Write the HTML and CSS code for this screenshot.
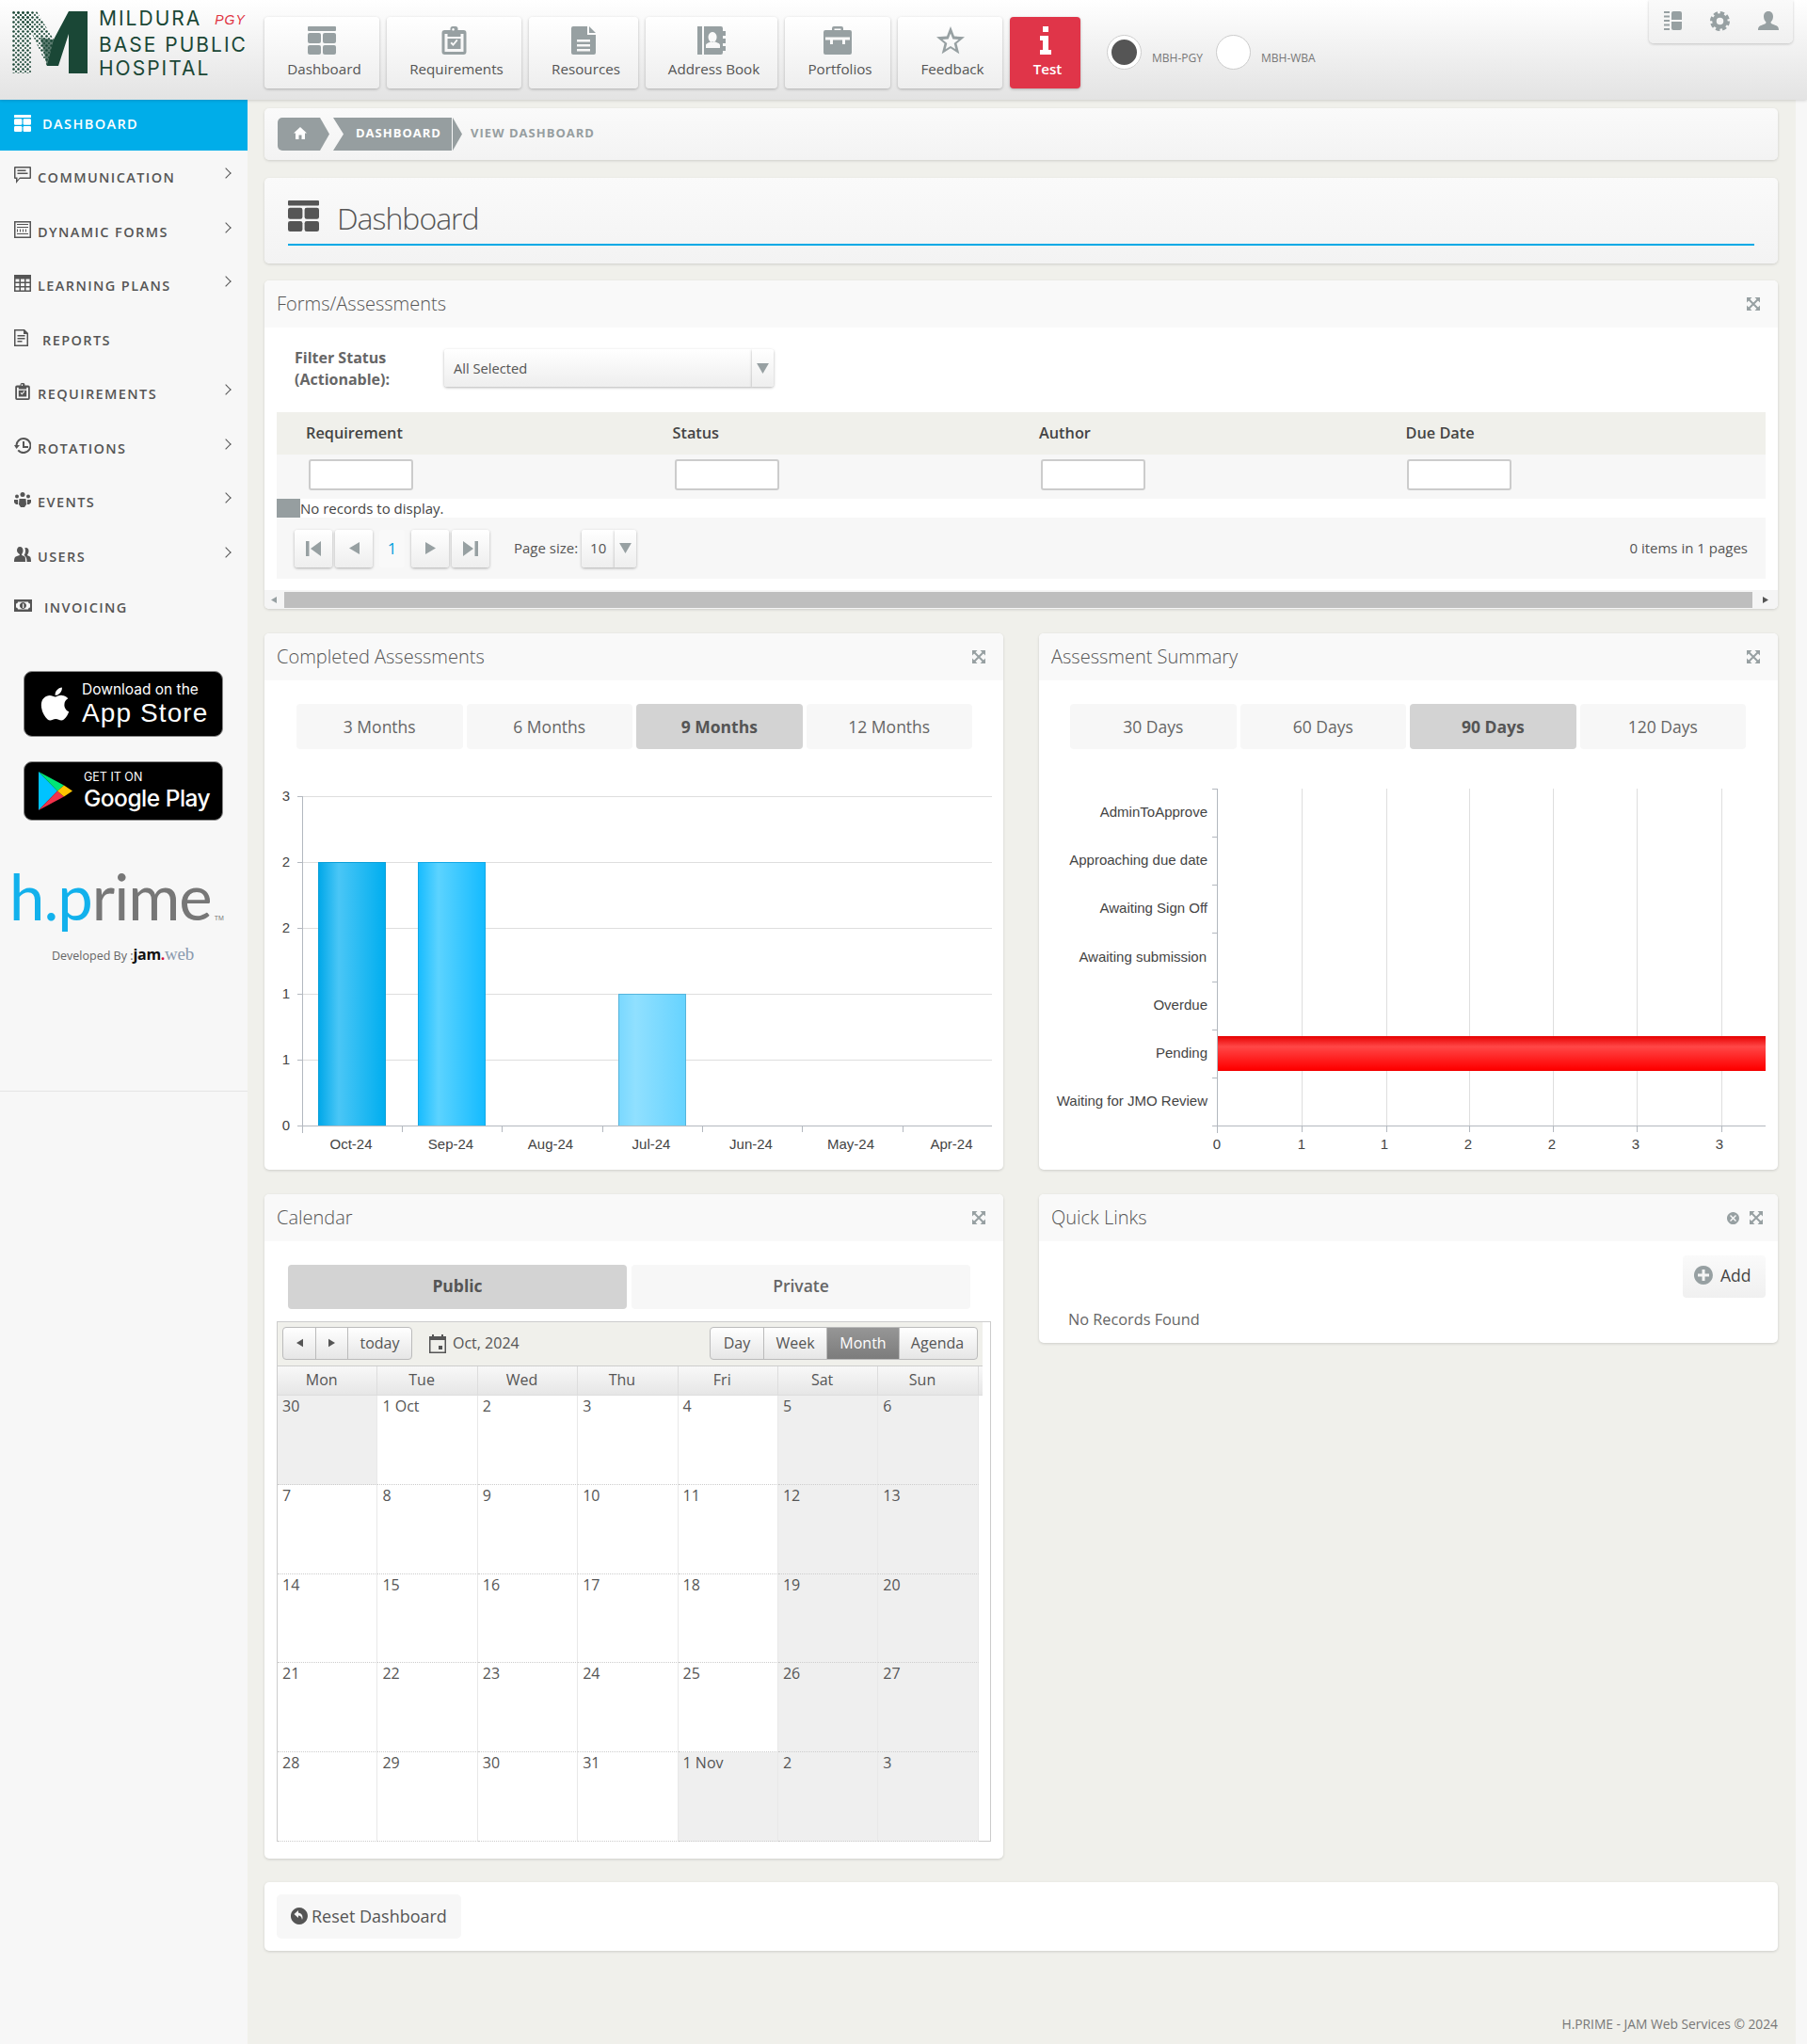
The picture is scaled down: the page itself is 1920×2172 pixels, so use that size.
FILE: index.html
```html
<!DOCTYPE html>
<html lang="en">
<head>
    <meta charset="UTF-8">
    <meta name="viewport" content="width=device-width, initial-scale=1.0">
    <title>Dashboard</title>
    <link rel="stylesheet" href="styles.css">
</head>
<body>
    <svg class="sprite" width="0" height="0">
        <defs>
            <symbol id="i-dash" viewBox="0 0 30 30"><rect width="30" height="5" rx="1"/><rect y="7" width="14" height="11" rx="2"/><rect x="16" y="7" width="14" height="11" rx="2"/><rect y="20" width="14" height="10" rx="2"/><rect x="16" y="20" width="14" height="10" rx="2"/></symbol>
            <symbol id="i-expand" viewBox="0 0 14 14"><path d="M0 0h5.500L0 5.500zM14 0v5.500L8.500 0zM0 14V8.500L5.500 14zM14 14H8.500L14 8.500z"/><path d="M2 2l10 10M12 2L2 12" stroke="currentColor" stroke-width="2" fill="none"/></symbol>
            <symbol id="i-clip" viewBox="0 0 26 30"><path fill-rule="evenodd" d="M3 4h6V2.500A2.500 2.500 0 0 1 11.500 0h3A2.500 2.500 0 0 1 17 2.500V4h6a3 3 0 0 1 3 3v20a3 3 0 0 1-3 3H3a3 3 0 0 1-3-3V7a3 3 0 0 1 3-3zm0 4v19h20V8h-3v3H6V8zm9-6a1.300 1.300 0 1 0 .1 0zM6 13h14v11H6zm3 5l3 3 5-6-1.400-1.200L12 18.200l-1.600-1.600z"/></symbol>
            <symbol id="i-arrow" viewBox="0 0 10 12"><path d="M10 0v12L0 6z"/></symbol>
            <symbol id="i-down" viewBox="0 0 14 12"><path d="M0 0h14L7 12z"/></symbol>
        </defs>
    </svg>

    <header class="topbar">
        <div class="brand">
            <svg class="brand-mark" viewBox="0 0 80 66">
                <defs>
                    <pattern id="dots" width="5" height="5" patternUnits="userSpaceOnUse"><circle cx="1.500" cy="1.500" r="1.300" fill="#1a4736"/><circle cx="4" cy="4" r="1" fill="#1a4736"/></pattern>
                </defs>
                <rect width="20" height="66" fill="url(#dots)"/>
                <polygon points="0,0 26,0 44,30 49,58 37,58 20,22" fill="url(#dots)"/>
                <polygon points="30,28 44,30 49,58 37,58" fill="#1a4736" opacity=".7"/>
                <polygon points="60,0 80,0 80,66 60,66 60,24 49,58 37,58 44,30" fill="#1a4736"/>
            </svg>
            <div class="brand-name">
                <div>MILDURA <em>PGY</em></div>
                <div>BASE PUBLIC</div>
                <div>HOSPITAL</div>
            </div>
        </div>
        <nav class="topnav">
            <a class="topnav-item w-dash"><svg width="30" height="30"><use href="#i-dash"/></svg><span>Dashboard</span></a>
            <a class="topnav-item w-req"><svg width="27" height="30"><use href="#i-clip"/></svg><span>Requirements</span></a>
            <a class="topnav-item w-res"><svg width="26" height="30" viewBox="0 0 26 30"><path fill-rule="evenodd" d="M2 0h15v9h9v19a2 2 0 0 1-2 2H2a2 2 0 0 1-2-2V2a2 2 0 0 1 2-2zm17 0l7 7h-7zM6 14v2.500h14V14zm0 5v2.500h14V19zm0 5v2.500h14V24z"/></svg><span>Resources</span></a>
            <a class="topnav-item w-addr"><svg width="30" height="30" viewBox="0 0 30 30"><path fill-rule="evenodd" d="M0 0h5v30H0zM7 0h18a2 2 0 0 1 2 2v3h3v5h-3v3h3v5h-3v3h3v5h-3v2a2 2 0 0 1-2 2H7zm9 6a4.500 5.500 0 1 0 .1 0zm-7 17h15v-3c0-2-4-3-5-3.500h-5C13 17 9 18 9 20z"/></svg><span>Address Book</span></a>
            <a class="topnav-item w-port"><svg width="30" height="30" viewBox="0 0 30 30"><path fill-rule="evenodd" d="M9 4V2a2 2 0 0 1 2-2h8a2 2 0 0 1 2 2v2h7a2 2 0 0 1 2 2v22a2 2 0 0 1-2 2H2a2 2 0 0 1-2-2V6a2 2 0 0 1 2-2zm2.500 0h7V2.500h-7zM2 11.500v3h5V19h3v-4.500h10V19h3v-4.500h5v-3z"/></svg><span>Portfolios</span></a>
            <a class="topnav-item w-feed"><svg width="30" height="30" viewBox="0 0 30 30"><path fill-rule="evenodd" d="M15 0l4 10.500 11 .8-8.500 7 2.800 11L15 23.300 5.700 29.300l2.800-11-8.500-7 11-.8zm0 7.500l-2.300 6-6.300.5 4.900 4-1.600 6.300 5.300-3.400 5.300 3.400-1.600-6.300 4.900-4-6.300-.5z"/></svg><span>Feedback</span></a>
            <a class="topnav-item w-test is-alert"><svg width="12" height="30" viewBox="0 0 12 30"><path d="M3 0h6v6H3zM0 10h9v15h3v5H0v-5h3V15H0z"/></svg><span>Test</span></a>
        </nav>
        <div class="site-switch">
            <span class="radio is-on"></span><label>MBH-PGY</label>
            <span class="radio"></span><label>MBH-WBA</label>
        </div>
        <div class="toolbox">
            <svg width="19" height="20" viewBox="0 0 19 20"><path d="M0 0h6v2H0zM0 4.500h6v2H0zM0 9h6v2H0zM0 13.500h6v2H0zM0 18h6v2H0zM8 2a2 2 0 0 1 2-2h7a2 2 0 0 1 2 2v7H8zM8 11h11v7a2 2 0 0 1-2 2h-7a2 2 0 0 1-2-2z"/></svg>
            <svg width="21" height="21" viewBox="0 0 21 21"><circle cx="10.500" cy="10.500" r="6" fill="none" stroke="#97a0a2" stroke-width="4.500"/><circle cx="10.500" cy="10.500" r="9" fill="none" stroke="#97a0a2" stroke-width="3" stroke-dasharray="4.400 2.670"/></svg>
            <svg width="22" height="20" viewBox="0 0 22 20"><path d="M11 0c3.500 0 5 2.500 5 5.500 0 2.500-1 4.500-2.500 6 0 1.500 1 2 4 3 3 1 4.500 2 4.500 5.500H0c0-3.500 1.500-4.500 4.500-5.500s4-1.500 4-3C7 10 6 8 6 5.500 6 2.500 7.500 0 11 0z"/></svg>
        </div>
    </header>

    <div class="layout">
        <aside class="sidebar">
            <div class="sidebar-inner">
                <ul class="sidemenu">
                    <li class="is-active"><svg width="18" height="18"><use href="#i-dash"/></svg><span class="gap-l">DASHBOARD</span></li>
                    <li><svg width="18" height="18" viewBox="0 0 18 18"><path fill-rule="evenodd" d="M1 0h16a1 1 0 0 1 1 1v11a1 1 0 0 1-1 1H6l-4 5v-5H1a1 1 0 0 1-1-1V1a1 1 0 0 1 1-1zm.5 1.500v10h2v3l2.500-3h10.500v-10zM3.500 3.500h9V5h-9zm0 3h11V8h-11z"/></svg><span>COMMUNICATION</span><i class="chev"></i></li>
                    <li><svg width="18" height="18" viewBox="0 0 18 18"><path fill-rule="evenodd" d="M0 0h18v18H0zm1.500 1.500v15h15v-15zM3 3h12v1H3zm0 3h12v1H3zm0 2.500h1v3H3zm3 0h1v3H6zm3 0h1v3H9zm3 0h1v3h-1zM3 13h12v1H3z"/></svg><span>DYNAMIC FORMS</span><i class="chev"></i></li>
                    <li><svg width="18" height="18" viewBox="0 0 18 18"><path fill-rule="evenodd" d="M0 0h18v18H0zm1.500 4.500v3h4v-3zm5.500 0v3h4v-3zm5.500 0v3h4v-3zm-11 4.500v3h4V9zM7 9v3h4V9zm5.500 0v3h4V9zm-11 4.500v3h4v-3zm5.500 0v3h4v-3zm5.500 0v3h4v-3z"/></svg><span>LEARNING PLANS</span><i class="chev"></i></li>
                    <li><svg width="15" height="18" viewBox="0 0 15 18"><path fill-rule="evenodd" d="M0 0h11l4 4v14H0zm1.500 1.500v15h12V5H10V1.500zM3.500 6h8v1.500h-8zm0 3h8v1.500h-8zm0 3h5v1.500h-5z"/></svg><span class="gap-r">REPORTS</span></li>
                    <li><svg width="18" height="18"><use href="#i-clip"/></svg><span>REQUIREMENTS</span><i class="chev"></i></li>
                    <li><svg width="18" height="18" viewBox="0 0 18 18"><path d="M10 0a8.500 8.500 0 1 1-6.500 14l1.500-1.300A6.500 6.500 0 1 0 3.500 8H6l-3.500 4L0 8h1.500A8.500 8.500 0 0 1 10 0zM9 4h2v5h4v2H9z"/></svg><span>ROTATIONS</span><i class="chev"></i></li>
                    <li><svg width="18" height="16" viewBox="0 0 18 16"><circle cx="9" cy="2.500" r="2.500"/><circle cx="3" cy="4.500" r="2"/><circle cx="15" cy="4.500" r="2"/><path d="M5.500 7h7l.5 6-2 3H7l-2-3zM0 8h4l.2 5H2L0 11zM14 8h4v3l-2 2h-2.200z"/></svg><span>EVENTS</span><i class="chev"></i></li>
                    <li><svg width="18" height="16" viewBox="0 0 18 16"><path d="M6 0c2.500 0 3.500 2 3.500 4 0 2-1 3.500-1.500 4 0 1 1 1.500 2.500 2S12 11.500 12 16H0c0-4.500 1-5.500 3-6s3-1 3-2C5 7.500 3 6 3 4 3 2 4 0 6 0zM12.500 1c2 0 3 1.500 3 3.500S14.500 8 14 8.500c0 1 1 1 2 1.500s2 1 2 6h-4.500c0-4-1-6-3-7C11.500 8 12 6 12 4c0-1-.3-2-.7-2.800z"/></svg><span>USERS</span><i class="chev"></i></li>
                    <li class="menu-last"><svg width="19" height="13" viewBox="0 0 19 13"><path fill-rule="evenodd" d="M0 0h19v13H0zm4 2.500A2 2 0 0 1 2 4.500v4A2 2 0 0 1 4 10.500h11A2 2 0 0 1 17 8.500v-4A2 2 0 0 1 15 2.500zM9.500 3a3.500 3.500 0 1 1-.1 0zM9 4.500V9h1.300V4.500z"/></svg><span class="gap-xl">INVOICING</span></li>
                </ul>

                <a class="store store-apple">
                    <svg width="31" height="40" viewBox="0 0 384 512"><path fill="#fff" d="M318.700 268.700c-.2-36.700 16.400-64.400 50-84.800-18.800-26.900-47.200-41.700-84.700-44.600-35.500-2.800-74.300 20.700-88.500 20.700-15 0-49.400-19.700-76.400-19.700C63.300 141.200 4 184.800 4 273.500q0 39.300 14.400 81.200c12.800 36.700 59 126.700 107.200 125.200 25.200-.6 43-17.900 75.800-17.900 31.800 0 48.300 17.900 76.400 17.900 48.600-.7 90.400-82.500 102.600-119.300-65.200-30.700-61.700-90-61.700-91.900zm-56.600-164.200c27.300-32.400 24.800-61.900 24-72.500-24.100 1.400-52 16.400-67.900 34.900-17.500 19.800-27.800 44.300-25.600 71.900 26.100 2 49.900-11.400 69.500-34.300z"/></svg>
                    <div class="store-text"><small>Download on the</small><b>App Store</b></div>
                </a>
                <a class="store store-google">
                    <svg width="36" height="41" viewBox="0 0 36 41">
                        <polygon points="0,0 20,20.500 0,41" fill="#00c3ff"/>
                        <polygon points="0,0 27,14.500 20,20.500" fill="#00e676"/>
                        <polygon points="0,41 27,26.500 20,20.500" fill="#f0324b"/>
                        <polygon points="27,14.500 36,20.500 27,26.500 20,20.500" fill="#ffc400"/>
                    </svg>
                    <div class="store-text"><small>GET IT ON</small><b>Google Play</b></div>
                </a>

                <div class="hprime"><span class="hprime-blue">h.p</span><span class="hprime-grey">rime</span><sup>TM</sup></div>
                <div class="devby">Developed By :<b>jam<u>.</u></b><span>web</span></div>
            </div>
        </aside>

        <main class="content">
            <div class="card crumbs">
                <a class="crumb crumb-home"><svg width="14" height="13" viewBox="0 0 14 13"><path fill="#fff" d="M7 0l7 6.500h-2V13H8.500V8.500h-3V13H2V6.500H0z"/></svg></a>
                <a class="crumb crumb-page"><span>DASHBOARD</span></a>
                <i class="crumb-tip"></i>
                <span class="crumb-last">VIEW DASHBOARD</span>
            </div>

            <div class="card page-title">
                <div class="page-title-in">
                    <svg width="33" height="33"><use href="#i-dash"/></svg>
                    <h1>Dashboard</h1>
                </div>
            </div>

            <section class="card panel">
                <div class="panel-head"><h2>Forms/Assessments</h2><svg class="expand" width="14" height="14"><use href="#i-expand"/></svg></div>
                <div class="filter">
                    <label>Filter Status<br>(Actionable):</label>
                    <div class="select"><span>All Selected</span></div>
                    <div class="select-btn"><svg width="13" height="11"><use href="#i-down"/></svg></div>
                </div>
                <div class="grid-table">
                    <div class="grid-head"><div>Requirement</div><div>Status</div><div>Author</div><div>Due Date</div></div>
                    <div class="grid-filter"><div><input type="text"></div><div><input type="text"></div><div><input type="text"></div><div><input type="text"></div></div>
                    <div class="grid-empty"><i></i><span>No records to display.</span></div>
                    <div class="pager">
                        <a class="pg-btn"><svg width="16" height="16" viewBox="0 0 16 16"><path d="M0 0h3.500v16H0zM16 0v16L5 8z"/></svg></a>
                        <a class="pg-btn"><svg width="11" height="15"><use href="#i-arrow"/></svg></a>
                        <span class="pg-num">1</span>
                        <a class="pg-btn"><svg class="flip" width="11" height="15"><use href="#i-arrow"/></svg></a>
                        <a class="pg-btn"><svg class="flip" width="16" height="16" viewBox="0 0 16 16"><path d="M0 0h3.500v16H0zM16 0v16L5 8z"/></svg></a>
                        <span class="pg-label">Page size:</span>
                        <span class="pg-size">10</span>
                        <a class="pg-size-btn"><svg width="13" height="11"><use href="#i-down"/></svg></a>
                        <span class="pg-info">0 items in 1 pages</span>
                    </div>
                </div>
                <div class="hscroll">
                    <svg width="6" height="11"><use href="#i-arrow"/></svg>
                    <div class="hscroll-thumb"></div>
                    <svg class="flip hscroll-end" width="6" height="11"><use href="#i-arrow"/></svg>
                </div>
            </section>

            <div class="cols cols-charts">
                <section class="card panel">
                    <div class="panel-head"><h2>Completed Assessments</h2><svg class="expand" width="14" height="14"><use href="#i-expand"/></svg></div>
                    <div class="tabs">
                        <a>3 Months</a><a>6 Months</a><a class="is-on">9 Months</a><a>12 Months</a>
                    </div>
                    <svg class="chart" width="785" height="430" viewBox="281 813 785 430">
                        <defs>
                            <linearGradient id="bar1"><stop offset="0" stop-color="#00a8e9"/><stop offset=".3" stop-color="#4ac6f6"/><stop offset="1" stop-color="#00aeef"/></linearGradient>
                            <linearGradient id="bar2"><stop offset="0" stop-color="#17bcff"/><stop offset=".3" stop-color="#5cd3ff"/><stop offset="1" stop-color="#14bbff"/></linearGradient>
                            <linearGradient id="bar3"><stop offset="0" stop-color="#7ad8ff"/><stop offset=".25" stop-color="#90e0ff"/><stop offset="1" stop-color="#66d3ff"/></linearGradient>
                            <linearGradient id="bar4" x2="0" y2="1"><stop offset="0" stop-color="#e60000"/><stop offset=".3" stop-color="#ff4747"/><stop offset=".95" stop-color="#ff0000"/><stop offset="1" stop-color="#e00"/></linearGradient>
                        </defs>
                        <g class="gridline">
                            <line x1="321" x2="1054" y1="846.500" y2="846.500"/><line x1="321" x2="1054" y1="916.500" y2="916.500"/><line x1="321" x2="1054" y1="986.500" y2="986.500"/><line x1="321" x2="1054" y1="1056.500" y2="1056.500"/><line x1="321" x2="1054" y1="1126.500" y2="1126.500"/>
                        </g>
                        <rect x="338.500" y="916.500" width="71" height="280" fill="url(#bar1)" stroke="#0a9fd8"/>
                        <rect x="444.500" y="916.500" width="71" height="280" fill="url(#bar2)" stroke="#12a8e6"/>
                        <rect x="657.500" y="1056.500" width="71" height="140" fill="url(#bar3)" stroke="#55b4dc"/>
                        <g class="axis">
                            <line x1="321.500" x2="321.500" y1="846" y2="1204"/><line x1="316" x2="1054" y1="1196.500" y2="1196.500"/>
                            <line x1="316" x2="321" y1="846.500" y2="846.500"/><line x1="316" x2="321" y1="916.500" y2="916.500"/><line x1="316" x2="321" y1="986.500" y2="986.500"/><line x1="316" x2="321" y1="1056.500" y2="1056.500"/><line x1="316" x2="321" y1="1126.500" y2="1126.500"/>
                            <line x1="427.500" x2="427.500" y1="1196" y2="1203"/><line x1="533.500" x2="533.500" y1="1196" y2="1203"/><line x1="640.500" x2="640.500" y1="1196" y2="1203"/><line x1="746.500" x2="746.500" y1="1196" y2="1203"/><line x1="852.500" x2="852.500" y1="1196" y2="1203"/><line x1="959.500" x2="959.500" y1="1196" y2="1203"/>
                        </g>
                        <g class="chart-text" text-anchor="middle">
                            <text x="304" y="851">3</text><text x="304" y="921">2</text><text x="304" y="991">2</text><text x="304" y="1061">1</text><text x="304" y="1131">1</text><text x="304" y="1201">0</text>
                            <text x="373" y="1221">Oct-24</text><text x="479" y="1221">Sep-24</text><text x="585" y="1221">Aug-24</text><text x="692" y="1221">Jul-24</text><text x="798" y="1221">Jun-24</text><text x="904" y="1221">May-24</text><text x="1011" y="1221">Apr-24</text>
                        </g>
                    </svg>
                </section>

                <section class="card panel">
                    <div class="panel-head"><h2>Assessment Summary</h2><svg class="expand" width="14" height="14"><use href="#i-expand"/></svg></div>
                    <div class="tabs tabs-r">
                        <a>30 Days</a><a>60 Days</a><a class="is-on">90 Days</a><a>120 Days</a>
                    </div>
                    <svg class="chart" width="785" height="430" viewBox="1104 813 785 430">
                        <g class="gridline">
                            <line x1="1383.500" x2="1383.500" y1="838" y2="1196"/><line x1="1473.500" x2="1473.500" y1="838" y2="1196"/><line x1="1561.500" x2="1561.500" y1="838" y2="1196"/><line x1="1650.500" x2="1650.500" y1="838" y2="1196"/><line x1="1739.500" x2="1739.500" y1="838" y2="1196"/><line x1="1829.500" x2="1829.500" y1="838" y2="1196"/>
                        </g>
                        <rect x="1293" y="1101" width="583" height="37" fill="url(#bar4)"/>
                        <g class="axis">
                            <line x1="1293.500" x2="1293.500" y1="838" y2="1204"/><line x1="1288" x2="1876" y1="1196.500" y2="1196.500"/>
                            <line x1="1288" x2="1293" y1="838.500" y2="838.500"/><line x1="1288" x2="1293" y1="889.500" y2="889.500"/><line x1="1288" x2="1293" y1="940.500" y2="940.500"/><line x1="1288" x2="1293" y1="991.500" y2="991.500"/><line x1="1288" x2="1293" y1="1043.500" y2="1043.500"/><line x1="1288" x2="1293" y1="1094.500" y2="1094.500"/><line x1="1288" x2="1293" y1="1145.500" y2="1145.500"/>
                            <line x1="1383.500" x2="1383.500" y1="1196" y2="1203"/><line x1="1473.500" x2="1473.500" y1="1196" y2="1203"/><line x1="1561.500" x2="1561.500" y1="1196" y2="1203"/><line x1="1650.500" x2="1650.500" y1="1196" y2="1203"/><line x1="1739.500" x2="1739.500" y1="1196" y2="1203"/><line x1="1829.500" x2="1829.500" y1="1196" y2="1203"/>
                        </g>
                        <g class="chart-text" text-anchor="end">
                            <text x="1283" y="868">AdminToApprove</text><text x="1283" y="919">Approaching due date</text><text x="1283" y="970">Awaiting Sign Off</text><text x="1282" y="1022">Awaiting submission</text><text x="1283" y="1073">Overdue</text><text x="1283" y="1124">Pending</text><text x="1283" y="1175">Waiting for JMO Review</text>
                        </g>
                        <g class="chart-text" text-anchor="middle">
                            <text x="1293" y="1221">0</text><text x="1383" y="1221">1</text><text x="1471" y="1221">1</text><text x="1560" y="1221">2</text><text x="1649" y="1221">2</text><text x="1738" y="1221">3</text><text x="1827" y="1221">3</text>
                        </g>
                    </svg>
                </section>
            </div>

            <div class="cols cols-cal">
                <section class="card panel">
                    <div class="panel-head"><h2>Calendar</h2><svg class="expand" width="14" height="14"><use href="#i-expand"/></svg></div>
                    <div class="tabs tabs-cal"><a class="is-on">Public</a><a>Private</a></div>
                    <div class="calendar">
                        <div class="cal-inner">
                            <div class="cal-toolbar">
                                <div class="btn-group">
                                    <a class="cal-arrow"><svg width="7" height="12"><use href="#i-arrow"/></svg></a>
                                    <a class="cal-arrow"><svg class="flip" width="7" height="12"><use href="#i-arrow"/></svg></a>
                                    <a class="cal-today">today</a>
                                </div>
                                <div class="cal-title">
                                    <svg width="18" height="20" viewBox="0 0 18 20"><path fill-rule="evenodd" d="M3 0h2v2h8V0h2v2h3v18H0V2h3zM1.500 6v12.500h15V6zM10 12h4v4h-4z"/></svg>
                                    <span>Oct, 2024</span>
                                </div>
                                <div class="btn-group btn-views">
                                    <a class="v-day">Day</a><a class="v-week">Week</a><a class="v-month is-on">Month</a><a class="v-agenda">Agenda</a>
                                </div>
                            </div>
                            <div class="cal-head"><div>Mon</div><div>Tue</div><div>Wed</div><div>Thu</div><div>Fri</div><div>Sat</div><div>Sun</div></div>
                            <div class="cal-body">
                                <div class="off">30</div><div>1 Oct</div><div>2</div><div>3</div><div>4</div><div class="off">5</div><div class="off">6</div>
                                <div>7</div><div>8</div><div>9</div><div>10</div><div>11</div><div class="off">12</div><div class="off">13</div>
                                <div>14</div><div>15</div><div>16</div><div>17</div><div>18</div><div class="off">19</div><div class="off">20</div>
                                <div>21</div><div>22</div><div>23</div><div>24</div><div>25</div><div class="off">26</div><div class="off">27</div>
                                <div>28</div><div>29</div><div>30</div><div>31</div><div class="off">1 Nov</div><div class="off">2</div><div class="off">3</div>
                            </div>
                        </div>
                    </div>
                </section>

                <section class="card panel panel-links">
                    <div class="panel-head"><h2>Quick Links</h2>
                        <svg class="head-close" width="13" height="13" viewBox="0 0 13 13"><path fill-rule="evenodd" d="M6.500 0a6.500 6.500 0 1 1-.1 0zM4 3L3 4l2.500 2.500L3 9l1 1 2.500-2.500L9 10l1-1-2.500-2.500L10 4 9 3 6.500 5.500z"/></svg>
                        <svg class="expand expand-r" width="14" height="14"><use href="#i-expand"/></svg>
                    </div>
                    <div class="links-body">
                        <a class="btn-add"><svg width="20" height="20" viewBox="0 0 20 20"><path fill-rule="evenodd" d="M10 0a10 10 0 1 1-.1 0zM8.500 4v4.500H4v3h4.500V16h3v-4.500H16v-3h-4.500V4z"/></svg><span>Add</span></a>
                        <p>No Records Found</p>
                    </div>
                </section>
            </div>

            <div class="card reset-card">
                <a class="btn-reset"><svg width="18" height="18" viewBox="0 0 18 18"><path fill-rule="evenodd" d="M9 0a9 9 0 1 1-.1 0zM8 3L3.500 7 8 11V8.500c2 0 3.500 1 4 4.500 1.500-4-.5-7-4-7.500z"/></svg>Reset Dashboard</a>
            </div>

            <footer class="foot">H.PRIME - JAM Web Services © 2024</footer>
        </main>
        <div class="edge"></div>
    </div>
</body>
</html>
```

FILE: styles.css
```css
* {
    box-sizing: border-box;
}

body {
    margin: 0;
    width: 1920px;
    height: 2172px;
    overflow: hidden;
    font-family: "Open Sans", "Liberation Sans", sans-serif;
    font-size: 14px;
    color: #555;
    background-color: #f0f0eb;
}

a {
    color: inherit;
    text-decoration: none;
}

svg {
    display: block;
    fill: currentColor;
    flex: none;
}

.flip {
    transform: scaleX(-1);
}

.sprite {
    position: absolute;
}

/* top bar */
.topbar {
    position: relative;
    z-index: 2;
    display: flex;
    align-items: flex-start;
    height: 106px;
    background: linear-gradient(#fff, #e3e3e3);
    box-shadow: 0 1px 3px rgba(0, 0, 0, 0.15);
}

.brand {
    display: flex;
    width: 281px;
    padding: 12px 0 0 13px;
}

.brand-mark {
    width: 80px;
    height: 66px;
}

.brand-name {
    margin: -5px 0 0 12px;
    font-family: "Inter", "Liberation Sans", sans-serif;
    font-size: 21px;
    line-height: 25.500px;
    letter-spacing: 2px;
    color: #1a4736;
    white-space: nowrap;
}

.brand-name em {
    margin-left: 6px;
    font-family: "Liberation Sans", sans-serif;
    font-size: 14px;
    letter-spacing: 1px;
    color: #e0323f;
    vertical-align: 1px;
}

.topnav {
    display: flex;
    gap: 8px;
    padding-top: 18px;
}

.topnav-item {
    display: flex;
    flex-direction: column;
    align-items: center;
    height: 76px;
    padding-top: 10px;
    border-radius: 4px;
    color: #97a0a2;
    background: linear-gradient(#fff, #eee);
    box-shadow: 0 1px 3px rgba(0, 0, 0, 0.25);
}

.topnav-item span {
    margin: 5px 0 0 5px;
    font-size: 15.200px;
    line-height: 20px;
    color: #555;
}

.w-dash { width: 122px; }
.w-req { width: 143px; }
.w-res { width: 116px; }
.w-addr { width: 140px; }
.w-port { width: 112px; }
.w-feed { width: 111px; }
.w-test { width: 75px; }

.topnav-item.is-alert {
    color: #fff;
    background: #e03549;
}

.is-alert span {
    font-weight: 600;
    color: #fff;
}

.site-switch {
    display: flex;
    align-items: flex-start;
    padding: 37px 0 0 28px;
}

.radio {
    width: 37px;
    height: 37px;
    border: 1px solid #ccc;
    border-radius: 50%;
    background-color: #fff;
}

.radio.is-on {
    border: 5px solid #fff;
    outline: 1px solid #ccc;
    outline-offset: -1px;
    background-color: #555;
}

.site-switch label {
    width: 79px;
    padding: 15px 0 0 11px;
    font-size: 12px;
    line-height: 20px;
    color: #777;
}

.toolbox {
    position: absolute;
    top: 0;
    left: 1752px;
    display: flex;
    justify-content: space-between;
    width: 153px;
    height: 46px;
    padding: 12px 15px 0 16px;
    border-radius: 0 0 5px 5px;
    color: #97a0a2;
    background: linear-gradient(#fafafa, #f0f0f0);
    box-shadow: 0 1px 3px rgba(0, 0, 0, 0.2);
}

/* layout */
.layout {
    display: flex;
    height: 2066px;
}

.sidebar {
    flex: none;
    width: 263px;
    background-color: #f7f7f7;
}

.sidebar-inner {
    height: 1054px;
    border-bottom: 1px solid #e5e5e5;
}

.edge {
    flex: none;
    width: 12px;
    background-color: #f7f7f7;
}

.content {
    flex: none;
    width: 1645px;
    padding: 9px 19px 0 18px;
}

/* side menu */
.sidemenu {
    margin: 0;
    padding: 0;
    list-style: none;
}

.sidemenu li {
    position: relative;
    display: flex;
    align-items: center;
    height: 57.500px;
    padding: 0 0 0 15px;
    color: #555;
}

.sidemenu li svg {
    margin-top: -5px;
}

.sidemenu li.is-active {
    height: 54px;
    padding-bottom: 3px;
    color: #fff;
    background-color: #00ade9;
}

.sidemenu li.is-active svg {
    margin-top: -2px;
}

.sidemenu li.menu-last {
    height: 51px;
}

.sidemenu span {
    margin-left: 7px;
    font-size: 14.500px;
    font-weight: 600;
    letter-spacing: 1.400px;
    white-space: nowrap;
}

.sidemenu span.gap-l {
    margin-left: 12px;
}

.sidemenu span.gap-r {
    margin-left: 15px;
}

.sidemenu span.gap-xl {
    margin-left: 13px;
}

.chev {
    position: absolute;
    left: 236px;
    top: 20px;
    width: 8px;
    height: 8px;
    border-top: 1.500px solid #555;
    border-right: 1.500px solid #555;
    transform: rotate(45deg);
}

/* store badges */
.store {
    display: flex;
    align-items: center;
    width: 212px;
    margin-left: 25px;
    border: 1px solid #888;
    border-radius: 9px;
    color: #fff;
    background-color: #000;
}

.store-apple {
    height: 70px;
    margin-top: 42px;
    padding-left: 17px;
}

.store-google {
    height: 63px;
    margin-top: 26px;
    padding-left: 15px;
}

.store-text {
    display: flex;
    flex-direction: column;
    margin-left: 13px;
    font-family: "Inter", "Liberation Sans", sans-serif;
    white-space: nowrap;
}

.store-text small {
    font-size: 15.500px;
    line-height: 19px;
}

.store-text b {
    font-family: "Liberation Sans", sans-serif;
    font-size: 28px;
    font-weight: 400;
    line-height: 32px;
    letter-spacing: 1.100px;
}

.store-google .store-text {
    margin-left: 12px;
}

.store-google .store-text small {
    font-size: 12.500px;
    line-height: 15px;
}

.store-google .store-text b {
    font-family: "Inter", "Liberation Sans", sans-serif;
    font-size: 24.500px;
    font-weight: 500;
    line-height: 30px;
    letter-spacing: -0.5px;
}

.hprime {
    display: flex;
    align-items: baseline;
    height: 72px;
    margin: 44px 0 0 10px;
    font-family: "Lato", sans-serif;
    font-size: 67px;
    line-height: 72px;
    letter-spacing: -1px;
}

.hprime-blue {
    color: #12b1ec;
}

.hprime-grey {
    color: #777;
}

.hprime sup {
    margin-left: 3px;
    font-family: "Liberation Sans", sans-serif;
    font-size: 7px;
    line-height: 7px;
    letter-spacing: 0;
    color: #777;
}

.devby {
    margin: 16px 0 0 55px;
    font-size: 12.500px;
    line-height: 20px;
    color: #666;
    white-space: nowrap;
}

.devby b {
    font-size: 16px;
    font-weight: 700;
    letter-spacing: -0.3px;
    color: #111;
}

.devby u {
    text-decoration: none;
    color: #d0103a;
}

.devby span {
    font-family: "Liberation Serif", serif;
    font-size: 19px;
    letter-spacing: -0.3px;
    color: #8a9aae;
}

/* cards */
.card {
    border-radius: 5px;
    background-color: #fff;
    box-shadow: 0 1px 3px rgba(0, 0, 0, 0.15);
}

.crumbs {
    display: flex;
    align-items: center;
    height: 55px;
    padding-left: 14px;
    background: linear-gradient(#fafafa, #f3f3f3);
}

.crumb {
    display: flex;
    align-items: center;
    height: 35px;
    padding-bottom: 3px;
    font-size: 13px;
    font-weight: 700;
    letter-spacing: 1px;
    color: #fff;
    background-color: #969ea0;
}

.crumb-home {
    justify-content: center;
    width: 55px;
    padding-right: 8px;
    border-radius: 5px 0 0 5px;
    clip-path: polygon(0 0, 45px 0, 100% 50%, 45px 100%, 0 100%);
}

.crumb-page {
    width: 126px;
    margin-left: 4px;
    padding-left: 24px;
    clip-path: polygon(0 0, 100% 0, 100% 100%, 0 100%, 11px 50%);
}

.crumb-tip {
    width: 10px;
    height: 35px;
    margin-left: 1px;
    background-color: #969ea0;
    clip-path: polygon(0 0, 100% 50%, 0 100%);
}

.crumb-last {
    margin: 0 0 3px 9px;
    font-size: 13px;
    font-weight: 700;
    letter-spacing: 1px;
    color: #969ea0;
}

.page-title {
    height: 91px;
    margin-top: 19px;
    padding: 24px 25px 0 25px;
    background: linear-gradient(#fafafa, #f3f3f3);
}

.page-title-in {
    display: flex;
    height: 48px;
    border-bottom: 2px solid #00a9e6;
    color: #555;
}

.page-title h1 {
    margin: -3px 0 0 19px;
    font-size: 32px;
    font-weight: 300;
    line-height: 44px;
    letter-spacing: -1px;
}

.panel {
    margin-top: 18px;
    overflow: hidden;
}

.panel-head {
    display: flex;
    align-items: center;
    height: 50px;
    padding: 0 12px 0 13px;
    background-color: #f9f9f9;
}

.panel-head h2 {
    flex: 1;
    margin: -2px 0 0;
    font-size: 20px;
    font-weight: 300;
    color: #555;
}

.expand {
    margin-right: 7px;
    color: #97a0a2;
}

.expand-r {
    margin: 0 4px 0 11px;
}

.head-close {
    color: #97a0a2;
}

/* forms table */
.filter {
    position: relative;
    display: flex;
    align-items: flex-start;
    height: 90px;
    padding: 21px 0 0 32px;
}

.filter label {
    width: 159px;
    font-size: 16px;
    font-weight: 700;
    line-height: 23px;
    color: #666;
}

.select {
    width: 327px;
    height: 40px;
    margin-top: 2px;
    padding: 0 10px;
    border-radius: 3px 0 0 3px;
    font-size: 14.700px;
    line-height: 40px;
    background: linear-gradient(#fff, #eee);
    box-shadow: 0 1px 3px rgba(0, 0, 0, 0.3);
}

.select-btn {
    margin-top: 2px;
}

.select-btn,
.pg-size-btn {
    display: flex;
    align-items: center;
    justify-content: center;
    width: 23px;
    height: 40px;
    border-radius: 0 3px 3px 0;
    color: #97a0a2;
    background: linear-gradient(#fff, #eee);
    box-shadow: 0 1px 3px rgba(0, 0, 0, 0.3);
}

.grid-table {
    margin: 0 13px;
}

.grid-head {
    display: grid;
    grid-template-columns: repeat(4, 389.500px);
    height: 45px;
    padding-left: 31px;
    font-size: 16.300px;
    font-weight: 600;
    line-height: 44px;
    background-color: #f0f0eb;
    color: #444;
}

.grid-filter {
    display: grid;
    grid-template-columns: repeat(4, 389px);
    height: 47px;
    padding: 5px 0 0 34px;
    background-color: #f7f7f7;
}

.grid-filter input {
    display: block;
    width: 111px;
    height: 33px;
    border: 2px solid #ccc;
    border-radius: 3px;
    background-color: #fff;
}

.grid-empty {
    display: flex;
    height: 20px;
    line-height: 20px;
    color: #444;
    font-size: 15px;
}

.grid-empty i {
    width: 25px;
    background-color: #969ea0;
}

.pager {
    display: flex;
    align-items: center;
    height: 65px;
    padding: 0 19px;
    background-color: #f7f7f7;
    font-size: 15px;
}

.pg-btn {
    display: flex;
    align-items: center;
    justify-content: center;
    width: 40px;
    height: 40px;
    margin-right: 3px;
    border-radius: 3px;
    color: #97a0a2;
    background: linear-gradient(#fff, #eee);
    box-shadow: 0 1px 3px rgba(0, 0, 0, 0.3);
}

.pg-num {
    width: 27px;
    height: 40px;
    margin: 0 7px 0 4px;
    border-radius: 3px;
    font-size: 17px;
    line-height: 40px;
    text-align: center;
    color: #00a0dc;
    background-color: #f9f9f9;
}

.pg-label {
    margin: 0 4px 2px 23px;
}

.pg-size {
    width: 35px;
    height: 40px;
    border-radius: 3px 0 0 3px;
    line-height: 38px;
    text-align: center;
    background: linear-gradient(#fff, #eee);
    box-shadow: 0 1px 3px rgba(0, 0, 0, 0.3);
}

.pg-info {
    margin: 0 0 2px auto;
}

.hscroll {
    display: flex;
    align-items: center;
    height: 20px;
    margin-top: 12px;
    padding: 2px 8px 1px 7px;
    color: #97a0a2;
    background-color: #f5f5f5;
}

.hscroll-thumb {
    width: 1560px;
    height: 100%;
    margin: 0 11px 0 8px;
    background-color: #bebebe;
}

.hscroll-end {
    color: #555;
}

/* chart panels */
.cols {
    display: grid;
    grid-template-columns: 785px 785px;
    column-gap: 38px;
}

.cols-charts {
    margin-top: 8px;
}

.cols-charts .panel {
    height: 570px;
}

.cols-cal {
    margin-top: 8px;
    align-items: start;
}

.tabs {
    display: flex;
    gap: 4px;
    padding: 25px 0 0 34px;
}

.tabs a {
    width: 176.500px;
    height: 48px;
    border-radius: 4px;
    font-size: 17.500px;
    line-height: 48px;
    text-align: center;
    color: #666;
    background-color: #f7f7f7;
}

.tabs a.is-on {
    font-weight: 700;
    color: #555;
    background-color: #d3d3d3;
}

.tabs-r {
    padding-left: 33px;
}

.chart {
    margin-top: 17px;
}

.gridline line {
    stroke: #dedede;
    stroke-width: 1;
}

.axis line {
    stroke: #b3b8bf;
    stroke-width: 1;
}

.chart-text text {
    font-family: "Liberation Sans", sans-serif;
    font-size: 15px;
    fill: #444;
}

/* calendar */
.tabs-cal {
    gap: 5px;
    padding: 25px 0 0 25px;
}

.tabs-cal a {
    width: 360px;
    height: 47px;
    font-weight: 600;
    line-height: 45px;
}

.calendar {
    width: 759px;
    height: 553px;
    margin: 13px 0 18px 13px;
    border: 1px solid #ccc;
}

.cal-inner {
    width: 749px;
}

.cal-toolbar {
    display: flex;
    align-items: center;
    height: 47px;
    padding: 0 5px 1px;
    background-color: #f0f0eb;
    border-bottom: 1px solid #ccc;
    font-size: 15px;
}

.btn-group {
    display: flex;
    height: 35px;
    border: 1px solid #bbb;
    border-radius: 4px;
    overflow: hidden;
    background: linear-gradient(#fff, #e6e6e6);
}

.btn-group a {
    display: flex;
    align-items: center;
    justify-content: center;
    padding-bottom: 2px;
    border-left: 1px solid #bbb;
    font-size: 16px;
}

.btn-group a:first-child {
    border-left: 0;
}

.cal-arrow {
    width: 34px;
}

.cal-today {
    width: 68px;
}

.cal-title {
    display: flex;
    align-items: center;
    gap: 7px;
    margin-left: 18px;
    font-size: 16px;
}

.cal-title span {
    margin-bottom: 2px;
}

.btn-views {
    margin-left: auto;
}

.v-day { width: 56px; }
.v-week { width: 67px; }
.v-month { width: 77px; }
.v-agenda { width: 83px; padding-right: 2px; }

.btn-group a.is-on {
    color: #fff;
    background: linear-gradient(#969696, #7c7c7c);
}

.cal-head {
    display: grid;
    grid-template-columns: repeat(7, 106.400px);
    height: 31px;
    font-size: 16px;
    line-height: 28px;
    text-align: center;
    background: linear-gradient(#f8f8f8, #e6e6e6);
    border-bottom: 1px solid #ddd;
}

.cal-head div {
    padding-right: 12px;
    border-right: 1px solid #ddd;
}

.cal-body {
    display: grid;
    grid-template-columns: repeat(7, 106.400px);
    grid-auto-rows: 94.800px;
    font-size: 16px;
    line-height: 22px;
}

.cal-body div {
    padding: 0 0 0 5px;
    border-right: 1px solid #e8e8e8;
    border-bottom: 1px dotted #ccc;
    background-color: #fff;
}

.cal-body div.off {
    background-color: #efefef;
}

/* quick links */
.links-body {
    height: 108px;
    padding: 15px 13px 0 31px;
}

.btn-add {
    display: flex;
    align-items: center;
    gap: 8px;
    width: 88px;
    height: 45px;
    margin-left: auto;
    padding: 0 0 3px 12px;
    border-radius: 4px;
    font-size: 17.500px;
    color: #97a0a2;
    background: linear-gradient(#fafafa, #f0f0f0);
}

.btn-add span {
    color: #444;
}

.links-body p {
    margin: 11px 0 0;
    font-size: 16.300px;
    line-height: 24px;
    color: #666;
}

.btn-reset {
    display: flex;
    align-items: center;
    gap: 4px;
    width: 196px;
    height: 47px;
    padding: 0 0 2px 15px;
    border-radius: 5px;
    font-size: 18px;
    background-color: #f7f7f7;
}

.reset-card {
    height: 73px;
    margin-top: 25px;
    padding: 13px;
}

.foot {
    margin-top: 69px;
    font-size: 13.800px;
    line-height: 18px;
    text-align: right;
    color: #777;
}
```
